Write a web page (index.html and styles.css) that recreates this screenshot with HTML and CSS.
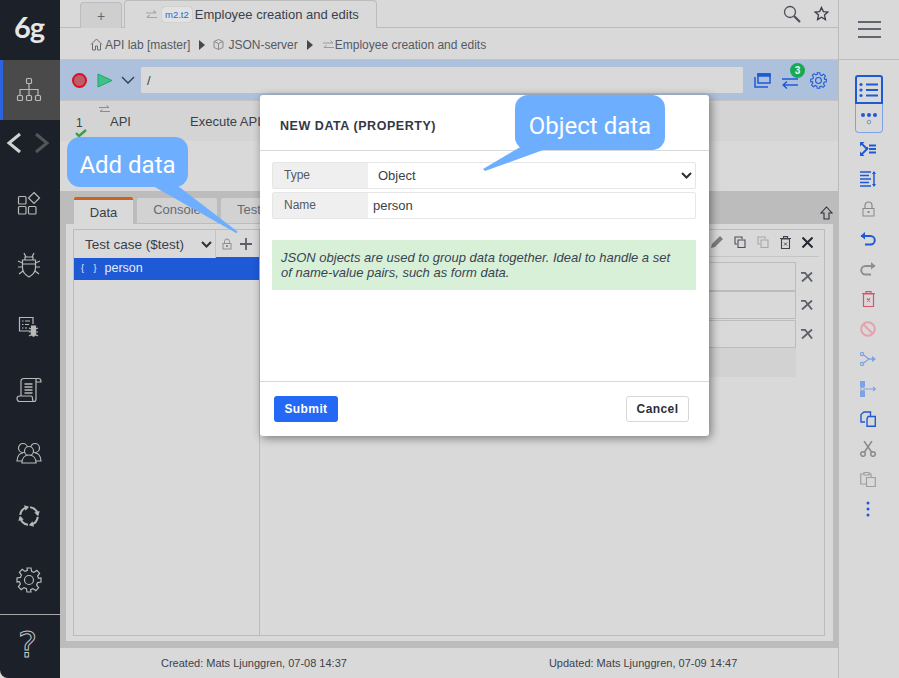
FILE: index.html
```html
<!DOCTYPE html>
<html lang="en">
<head>
    <meta charset="UTF-8">
    <meta name="viewport" content="width=device-width, initial-scale=1.0">
    <title>Employee creation and edits</title>
    <link rel="stylesheet" href="styles.css">
</head>
<body>
<div class="app">
    <nav class="sidebar">
        <div class="logo">6g</div>
        <div class="side-item active">
            <svg width="26" height="26" viewBox="0 0 26 26" fill="none" stroke="#b9b9b9" stroke-width="1.2"><rect x="10.5" y="1.5" width="5" height="5" rx="1"/><rect x="1.5" y="18.5" width="5" height="5" rx="1"/><rect x="10.5" y="18.5" width="5" height="5" rx="1"/><rect x="19.5" y="18.5" width="5" height="5" rx="1"/><path d="M13 6.5v12M4 18.5v-6h18v6"/></svg>
        </div>
        <div class="side-arrows">
            <svg width="48" height="24" viewBox="0 0 48 24" fill="none" stroke-width="3"><path d="M15 3 L4 12 L15 21" stroke="#d2d2d2"/><path d="M31 3 L42 12 L31 21" stroke="#555"/></svg>
        </div>
        <div class="side-item s-62">
            <svg width="24" height="24" viewBox="0 0 24 24" fill="none" stroke="#b9b9b9" stroke-width="1.2"><rect x="1.5" y="5.5" width="7.5" height="7.5" rx="1"/><rect x="1.5" y="15.5" width="7.5" height="7.5" rx="1"/><rect x="11.5" y="15.5" width="7.5" height="7.5" rx="1"/><path d="M17 1.5 L22.5 7 L17 12.5 L11.5 7Z"/></svg>
        </div>
        <div class="side-item s-62">
            <svg width="24" height="26" viewBox="0 0 24 26" fill="none" stroke="#b9b9b9" stroke-width="1.2"><path d="M7 1l2 4M17 1l-2 4M8 5h8v3H8zM5.500 8h13v8c0 4-3 7-6.500 9-3.500-2-6.500-5-6.500-9z"/><path d="M5.500 11L1 9M5.500 15H1M6 19l-4 3M18.500 11L23 9M18.500 15H23M18 19l4 3M5.500 12h13"/></svg>
        </div>
        <div class="side-item s-62">
            <svg width="22" height="22" viewBox="0 0 22 22" fill="none" stroke="#b9b9b9" stroke-width="1.2"><path d="M15 15H1.500V1.500H15V8"/><path d="M4 5h1.500M7 5h5M4 8.500h1.500M7 8.500h4M4 12h1.500M7 12h2"/><path d="M13.500 10h4v9c-1 1.500-3 1.500-4 0z" fill="#b9b9b9"/><path d="M11 12l2.500 1M11 16h2.500M11 20l2.500-1.500M20 12l-2.500 1M20 16h-2.500M20 20l-2.500-1.500"/></svg>
        </div>
        <div class="side-item s-64">
            <svg width="26" height="26" viewBox="0 0 26 26" fill="none" stroke="#b9b9b9" stroke-width="1.200"><path d="M5 19V4c0-1.500 1-2.500 3-2.500h15c1.500 0 2 1.500 2 3.500h-5M20 1.500V22c0 1.500-1 2.500-2 2.500H4c-2 0-3-1-3-3s1-2.500 3-2.500h11c1 0 1.500 1 1.500 2.500s.5 3 1.500 3"/><path d="M8.500 7h8M8.500 10h8M8.500 13h8M8.500 16h8" stroke-width="1.500"/></svg>
        </div>
        <div class="side-item s-62">
            <svg width="26" height="22" viewBox="0 0 26 22" fill="none" stroke="#b9b9b9" stroke-width="1.200"><circle cx="7" cy="6" r="4.500"/><circle cx="19" cy="6" r="4.500"/><path d="M7 11c-3 0-5.500 2-6 8h5M19 11c3 0 5.500 2 6 8h-5"/><circle cx="13" cy="9" r="4.500" fill="#1c2029"/><path d="M6 21c0-5 3-8 7-8s7 3 7 8z" fill="#1c2029"/></svg>
        </div>
        <div class="side-item s-63">
            <svg width="22" height="22" viewBox="0 0 22 22" fill="none"><circle cx="11" cy="11" r="8.800" stroke="#b9b9b9" stroke-width="2" stroke-dasharray="10.800 3" stroke-dashoffset="-1"/><g fill="#b9b9b9"><path id="cycle-head" d="M9 -.6L13.500 2.200 9 5z" transform="rotate(-15 11 11)"/><path d="M9 -.6L13.500 2.200 9 5z" transform="rotate(75 11 11)"/><path d="M9 -.6L13.500 2.200 9 5z" transform="rotate(165 11 11)"/><path d="M9 -.6L13.500 2.200 9 5z" transform="rotate(255 11 11)"/></g></svg>
        </div>
        <div class="side-item s-65">
            <svg width="26" height="26" viewBox="0 0 26 26" fill="none" stroke="#b9b9b9" stroke-width="1.200"><circle cx="13" cy="13" r="4.500"/><path d="M11 1h4l.6 3.400 2.300 1 2.900-2 2.800 2.800-2 2.900 1 2.300L25 11v4l-3.400.6-1 2.300 2 2.900-2.800 2.800-2.900-2-2.300 1L15 25h-4l-.6-3.400-2.300-1-2.900 2-2.800-2.800 2-2.900-1-2.300L1 15v-4l3.400-.6 1-2.300-2-2.900L6.200 2.400l2.900 2 2.300-1z"/></svg>
        </div>
        <div class="side-help">?</div>
    </nav>

    <main class="content">
        <div class="tabbar">
            <div class="tab tab-plus">+</div>
            <div class="tab tab-main">
                <svg class="swap" width="11" height="10" viewBox="0 0 11 10" fill="none" stroke="#a5a5a5" stroke-width="1.200"><path d="M0 3h10M7.500 .5L10 3M11 7.500H1M3.500 5L1 7.500"/></svg>
                <span class="tab-code">m2.t2</span>
                <span>Employee creation and edits</span>
            </div>
            <div class="tab-actions">
                <svg width="18" height="18" viewBox="0 0 18 18" fill="none" stroke="#4b4f58" stroke-width="1.300"><circle cx="7" cy="7" r="5.500"/><path d="M11 11l6 6" stroke-width="2.200"/></svg>
                <svg width="15" height="15" viewBox="0 0 16 16" fill="none" stroke="#3b3f48" stroke-width="1.400"><path d="M8 1.500l2 4.500 4.800.5-3.600 3.200 1 4.800L8 12l-4.200 2.500 1-4.800L1.200 6.500 6 6z"/></svg>
            </div>
        </div>
        <div class="crumbs">
            <svg width="13" height="13" viewBox="0 0 13 13" fill="none" stroke="#6d6d6d"><path d="M1 6.500L6.500 1 12 6.500M2.500 5.500V12h3V8h2v4h3V5.500"/></svg>
            <span class="crumb-first">API lab [master]</span>
            <span class="crumb-sep"></span>
            <svg class="crumb-box" width="11" height="11" viewBox="0 0 11 11" fill="none" stroke="#8a8a8a"><path d="M5.500 .5l4.500 2v6l-4.500 2-4.500-2v-6zM1 2.500l4.500 2 4.500-2M5.500 4.500v6"/></svg>
            <span>JSON-server</span>
            <span class="crumb-sep"></span>
            <svg class="crumb-swap" width="11" height="10" viewBox="0 0 11 10" fill="none" stroke="#9a9a9a"><path d="M0 3h10M7.500 .5L10 3M11 7.500H1M3.500 5L1 7.500"/></svg>
            <span>Employee creation and edits</span>
        </div>
        <div class="toolbar">
            <span class="rec"></span>
            <svg class="play" width="16" height="15" viewBox="0 0 16 15"><path d="M1 1l14 6.500L1 14z" fill="#41c18a" stroke="#17a866"/></svg>
            <svg class="chev" width="14" height="8" viewBox="0 0 14 8" fill="none" stroke="#2f3a52" stroke-width="1.300"><path d="M1 1l6 6 6-6"/></svg>
            <div class="url">/</div>
            <svg class="tool-a" width="17" height="15" viewBox="0 0 17 15" fill="none" stroke="#1f5ad6" stroke-width="1.500"><path d="M4 1h12v9H4zM1 4v10h13" /><path d="M4 1h12v2H4z" fill="#1f5ad6"/></svg>
            <div class="swap-wrap">
                <svg width="17" height="14" viewBox="0 0 17 14" fill="none" stroke="#1f5ad6" stroke-width="1.500"><path d="M0 4h16M16 10H1M5 6.500L1 10l4 3.500"/></svg>
                <span class="badge">3</span>
            </div>
            <svg class="tool-c" width="17" height="17" viewBox="0 0 26 26" fill="none" stroke="#1f5ad6" stroke-width="1.600"><circle cx="13" cy="13" r="4.500"/><path d="M11 1h4l.6 3.400 2.300 1 2.900-2 2.800 2.800-2 2.900 1 2.300L25 11v4l-3.400.6-1 2.300 2 2.900-2.800 2.800-2.900-2-2.300 1L15 25h-4l-.6-3.400-2.300-1-2.900 2-2.800-2.800 2-2.900-1-2.300L1 15v-4l3.400-.6 1-2.300-2-2.900L6.200 2.400l2.900 2 2.300-1z"/></svg>
        </div>
        <div class="step">
            <div class="step-num">1
                <svg class="step-ok" width="12" height="9" viewBox="0 0 12 9" fill="none" stroke="#3f9c46" stroke-width="2.400"><path d="M1 4l3 3 7-6"/></svg>
            </div>
            <div class="step-type">
                <svg width="11" height="9" viewBox="0 0 11 9" fill="none" stroke="#8b8b8b"><path d="M0 2.500h10M7.500 .5L10 2.500M11 6.500H1M3.500 4.500L1 6.500"/></svg>
                <span>API</span>
            </div>
            <div class="step-name">Execute API</div>
        </div>
        <div class="step-gap"></div>

        <section class="panel">
            <div class="panel-tabs">
                <div class="ptab ptab-on">Data</div>
                <div class="ptab">Console</div>
                <div class="ptab ptab-last">Test</div>
                <svg class="panel-up" width="13" height="14" viewBox="0 0 13 14" fill="none" stroke="#2b2f38" stroke-width="1.100"><path d="M6.500 1L12 7H9v6H4V7H1z"/></svg>
            </div>
            <div class="panel-body">
                <div class="data-box">
                    <div class="data-left">
                        <div class="data-head">
                            <div class="case-select">
                                <span>Test case ($test)</span>
                                <svg width="11" height="7" viewBox="0 0 11 7" fill="none" stroke="#2b2f38" stroke-width="2"><path d="M1 1l4.500 4.500L10 1"/></svg>
                            </div>
                            <div class="case-tools">
                                <svg width="10" height="12" viewBox="0 0 10 12" fill="#8f8f8f"><path d="M2.500 5V3.500a2.500 2.500 0 0 1 5 0V5" fill="none" stroke="#8f8f8f"/><path d="M.5 5h9v6.500h-9zM1.500 6v4.500h7V6z" fill-rule="evenodd"/><rect x="4" y="7" width="2" height="2"/></svg>
                                <svg width="12" height="12" viewBox="0 0 12 12" stroke="#5b5f68" stroke-width="1.800"><path d="M6 0v12M0 6h12"/></svg>
                            </div>
                        </div>
                        <div class="data-row">
                            <span class="braces">{ }</span>
                            <span>person</span>
                        </div>
                    </div>
                    <div class="data-right">
                        <div class="data-tools">
                            <svg width="12" height="12" viewBox="0 0 12 12" fill="#7c7c7c"><path d="M9 0l3 3-8 8-4 1 1-4z"/></svg>
                            <svg width="12" height="12" viewBox="0 0 12 12" fill="none" stroke="#4b4f58" stroke-width="1.100"><path d="M8 3V1H1v7h2"/><path d="M4 4h7v7.500H4z"/></svg>
                            <svg width="12" height="12" viewBox="0 0 12 12" fill="none" stroke="#a8a8a8" stroke-width="1.100"><path d="M8 3V1H1v7h2"/><path d="M4 4h7v7.500H4z"/></svg>
                            <svg width="11" height="13" viewBox="0 0 11 13" fill="none" stroke="#3f434c" stroke-width="1.100"><path d="M1.500 3h8v9.500h-8zM0 2.500h11M3.500 2.500V.6h4v1.900"/><path d="M4 6.500l3 3M7 6.500l-3 3" stroke-width=".9"/></svg>
                            <svg width="11" height="11" viewBox="0 0 11 11" stroke="#23262e" stroke-width="2"><path d="M.5 .5l10 10M10.500 .5l-10 10"/></svg>
                        </div>
                        <div class="prop-rows">
                            <div class="prop-row prop-a"><span class="prop-cell"></span><svg width="12" height="10" viewBox="0 0 12 10" fill="none" stroke="#5b5f68" stroke-width="1.800"><path d="M0 .8h4l7 8.700M11 .5L1 9.500"/></svg></div>
                            <div class="prop-row prop-b"><span class="prop-cell"></span><svg width="12" height="10" viewBox="0 0 12 10" fill="none" stroke="#5b5f68" stroke-width="1.800"><path d="M0 .8h4l7 8.700M11 .5L1 9.500"/></svg></div>
                            <div class="prop-row prop-c"><span class="prop-cell"></span><svg width="12" height="10" viewBox="0 0 12 10" fill="none" stroke="#5b5f68" stroke-width="1.800"><path d="M0 .8h4l7 8.700M11 .5L1 9.500"/></svg></div>
                            <div class="prop-row prop-a"><span class="prop-cell prop-shade"></span></div>
                        </div>
                    </div>
                </div>
            </div>
        </section>

        <footer class="status">
            <span class="status-a">Created: Mats Ljunggren, 07-08 14:37</span>
            <span class="status-b">Updated: Mats Ljunggren, 07-09 14:47</span>
        </footer>
    </main>

    <aside class="rightbar">
        <div class="menu-area"><span class="burger"></span></div>
        <div class="right-tools">
            <div class="view-box view-on">
                <svg width="20" height="16" viewBox="0 0 20 16" fill="#1f5ad6"><circle cx="2" cy="2.500" r="1.600"/><circle cx="2" cy="8" r="1.600"/><circle cx="2" cy="13.500" r="1.600"/><path d="M7 1.500h12v2H7zM7 7h12v2H7zM7 12.500h12v2H7z"/></svg>
            </div>
            <div class="view-box view-off">
                <svg width="18" height="13" viewBox="0 0 18 13" fill="#1f5ad6"><circle cx="3" cy="3" r="2"/><circle cx="9" cy="3" r="2"/><circle cx="15" cy="3" r="2"/><circle cx="9" cy="10" r="1.800" fill="none" stroke="#6f93d8"/></svg>
            </div>
            <div class="rt rt-first">
                <svg width="16" height="14" viewBox="0 0 16 14" fill="none" stroke="#1f5ad6" stroke-width="1.800"><path d="M1 1l5 5h2M1 13l5-5 2-2M9 3.500h7M9 7h7M9 10.500h7"/><path d="M0 0h4.500L0 4.500zM0 14h4.500L0 9.500z" fill="#1f5ad6" stroke="none"/></svg>
            </div>
            <div class="rt">
                <svg width="16" height="16" viewBox="0 0 16 16" fill="none" stroke="#1f5ad6" stroke-width="1.500"><path d="M0 1h11M0 4.500h9M0 8h11M0 11.500h9M0 15h11M14 1v14"/><path d="M12 3l2-3 2 3zM12 13l2 3 2-3z" fill="#1f5ad6" stroke="none"/></svg>
            </div>
            <div class="rt">
                <svg width="13" height="16" viewBox="0 0 13 16" fill="#8a8a8a"><path d="M3 7V4.500a3.500 3.500 0 0 1 7 0V7" fill="none" stroke="#8a8a8a" stroke-width="1.200"/><path d="M.5 7h12v8.500H.5zM1.500 8v6.500h10V8z" fill-rule="evenodd"/><rect x="5.500" y="10" width="2" height="2"/></svg>
            </div>
            <div class="rt">
                <svg width="16" height="14" viewBox="0 0 16 14" fill="none" stroke="#1f5ad6" stroke-width="2"><path d="M1 4h9.500a4 4 0 0 1 0 8.500H5"/><path d="M5 0L.5 4 5 7.500z" fill="#1f5ad6" stroke="none"/></svg>
            </div>
            <div class="rt">
                <svg width="16" height="14" viewBox="0 0 16 14" fill="none" stroke="#8f8f8f" stroke-width="2"><path d="M15 4H5.500a4 4 0 0 0 0 8.500H11"/><path d="M11 0l4.500 4L11 7.500z" fill="#8f8f8f" stroke="none"/></svg>
            </div>
            <div class="rt">
                <svg width="13" height="16" viewBox="0 0 13 16" fill="none" stroke="#d9536b" stroke-width="1.200"><path d="M1.500 3h10v12.500h-10zM0 2.500h13M4 2.500V.6h5v1.900"/><path d="M5 7.500l3 3M8 7.500l-3 3"/></svg>
            </div>
            <div class="rt">
                <svg width="16" height="16" viewBox="0 0 16 16" fill="none" stroke="#e3a3ae" stroke-width="2"><circle cx="8" cy="8" r="6.800"/><path d="M3.200 3.200l9.600 9.600"/></svg>
            </div>
            <div class="rt">
                <svg width="16" height="14" viewBox="0 0 16 14" fill="none" stroke="#7ea3e4" stroke-width="1.300"><circle cx="2" cy="2" r="1.600"/><circle cx="2" cy="12" r="1.600"/><path d="M3.500 3L9 7H13M3.500 11L9 7"/><path d="M12 4l4 3-4 3z" fill="#7ea3e4" stroke="none"/></svg>
            </div>
            <div class="rt">
                <svg width="16" height="16" viewBox="0 0 16 16" fill="none" stroke="#7ea3e4" stroke-width="1.100"><path d="M0 0h5v6H0zM0 10h5v6H0z" fill="#7ea3e4" stroke="none"/><circle cx="2.500" cy="8" r="1.800" fill="#d9d9d9"/><path d="M5 8h10M13 6l2.500 2L13 10"/></svg>
            </div>
            <div class="rt">
                <svg width="16" height="16" viewBox="0 0 16 16" fill="none" stroke="#1f5ad6" stroke-width="1.400"><path d="M7 1H4L1 3.500V11h4"/><path d="M8 5.500h7.300V15.300H7V8z" /><path d="M7 1h3.500v4"/></svg>
            </div>
            <div class="rt">
                <svg width="16" height="16" viewBox="0 0 16 16" fill="none" stroke="#8a8a8a" stroke-width="1.500"><circle cx="3" cy="13" r="2.300"/><circle cx="13" cy="13" r="2.300"/><path d="M4.500 11L12 0M11.500 11L4 0"/></svg>
            </div>
            <div class="rt">
                <svg width="16" height="16" viewBox="0 0 16 16" fill="none" stroke="#9f9f9f" stroke-width="1.200"><path d="M4 3H.7v10H6M4 1.500h5V4H4zM9 3h2v3"/><path d="M6.500 6.500h8.800v9H6.500z"/></svg>
            </div>
            <div class="rt">
                <svg width="4" height="16" viewBox="0 0 4 16" fill="#1f5ad6"><circle cx="2" cy="2" r="1.500"/><circle cx="2" cy="8" r="1.500"/><circle cx="2" cy="14" r="1.500"/></svg>
            </div>
        </div>
    </aside>

    <div class="modal">
        <div class="modal-head">NEW DATA (PROPERTY)</div>
        <div class="modal-body">
            <div class="field">
                <div class="field-label">Type</div>
                <div class="field-value field-select">
                    <span>Object</span>
                    <svg width="11" height="7" viewBox="0 0 11 7" fill="none" stroke="#2b2f38" stroke-width="2"><path d="M1 1l4.500 4.500L10 1"/></svg>
                </div>
            </div>
            <div class="field">
                <div class="field-label">Name</div>
                <div class="field-value">person</div>
            </div>
            <div class="hint">JSON objects are used to group data together. Ideal to handle a set of name-value pairs, such as form data.</div>
        </div>
        <div class="modal-foot">
            <button class="btn btn-submit">Submit</button>
            <button class="btn btn-cancel">Cancel</button>
        </div>
    </div>

    <div class="callout callout-add">Add data</div>
    <div class="callout callout-object">Object data</div>
    <svg class="tails" width="899" height="678" viewBox="0 0 899 678" fill="#6eaeff">
        <path d="M153 186 L178 186 L238 232 L236 233Z"/>
        <path d="M522 146 L546 149 L485 171 L483 169Z"/>
    </svg>
</div>
</body>
</html>
```

FILE: styles.css
```css
* {
    box-sizing: border-box;
}
body {
    margin: 0;
    font-family: "Liberation Sans", Arial, sans-serif;
    font-size: 12px;
    color: #3a3f4a;
    background: #d9d9d9;
}
svg {
    display: block;
    flex: none;
}
.app {
    position: relative;
    display: flex;
    width: 899px;
    height: 678px;
    overflow: hidden;
}

/* left nav */
.sidebar {
    width: 60px;
    flex: none;
    display: flex;
    flex-direction: column;
    background: #1c2029;
    border-bottom-left-radius: 8px;
}
.logo {
    height: 60px;
    padding: 9px 2px 0 0;
    text-align: center;
    font-family: Lato, sans-serif;
    font-weight: 700;
    font-size: 29px;
    color: #e6e6e6;
    letter-spacing: -1px;
}
.side-item {
    display: flex;
    align-items: center;
    justify-content: center;
    padding-right: 3px;
}
.side-item.active {
    height: 60px;
    background: #4a4a4a;
    border-left: 3px solid #2b63e0;
    padding-right: 5px;
}
.side-arrows {
    height: 46px;
    margin-bottom: 6px;
    display: flex;
    align-items: center;
    justify-content: center;
    padding: 0 2px 1px 0;
}
.s-62 { height: 62px; }
.s-63 { height: 63px; }
.s-64 { height: 64px; }
.s-65 { height: 65px; }
.side-help {
    margin-top: 2px;
    flex: 1;
    padding-right: 5px;
    border-top: 1px solid #a8a8a8;
    text-align: center;
    font-family: "DejaVu Sans", sans-serif;
    font-size: 36px;
    line-height: 60px;
    color: #1c2029;
    -webkit-text-stroke: 1px #c4c4c4;
}

/* centre */
.content {
    width: 778px;
    flex: none;
    display: flex;
    flex-direction: column;
}
.tabbar {
    height: 28px;
    display: flex;
    align-items: flex-end;
    padding-left: 20px;
    border-bottom: 1px solid #bcbcbc;
}
.tab {
    height: 27px;
    display: flex;
    align-items: center;
    margin-bottom: -1px;
    border: 1px solid #bcbcbc;
    border-bottom: 0;
    border-radius: 4px 4px 0 0;
}
.tab-plus {
    width: 42px;
    justify-content: center;
    background: #cfcfcf;
    color: #666;
    font-size: 14px;
    height: 26px;
}
.tab-main {
    width: 253px;
    margin-left: 2px;
    padding-left: 21px;
    font-size: 13px;
    background: #d9d9d9;
    height: 28px;
}
.tab-code {
    margin: 0 3px 0 5px;
    padding: 2px 3px;
    font-size: 9.500px;
    color: #2566d8;
    background: #e2e2e2;
    border-radius: 3px;
    box-shadow: 0 0 1px #999;
}
.tab-actions {
    margin-left: auto;
    display: flex;
    align-items: center;
    gap: 13px;
    height: 27px;
    padding-right: 9px;
}
.crumbs {
    height: 32px;
    display: flex;
    align-items: center;
    padding: 2px 0 0 30px;
    border-bottom: 1px solid #c4c4c4;
    color: #555a64;
    font-size: 12px;
}
.crumb-first {
    margin-left: 2px;
}
.crumb-sep {
    width: 0;
    height: 0;
    margin: 0 9px;
    border-left: 6px solid #45484f;
    border-top: 5.500px solid transparent;
    border-bottom: 5.500px solid transparent;
}
.crumb-box {
    margin: 0 4px 0 -1px;
}
.crumb-swap {
    margin: 0 1px 0 1px;
}
.toolbar {
    height: 41px;
    display: flex;
    align-items: center;
    padding-left: 12px;
    background: #aec1dc;
    border-bottom: 1px solid #c4c4c4;
}
.rec {
    width: 15px;
    height: 15px;
    border-radius: 50%;
    background: #c25a6a;
    border: 2px solid #d7111f;
}
.play {
    margin-left: 10px;
}
.chev {
    margin-left: 8px;
}
.url {
    width: 602px;
    height: 26px;
    margin-left: 6px;
    padding: 6px 6px;
    font-size: 13px;
    background: #d9d9d9;
    border-radius: 1px;
}
.tool-a {
    margin-left: 11px;
}
.swap-wrap {
    position: relative;
    margin-left: 11px;
    padding-top: 3px;
}
.badge {
    position: absolute;
    left: 8px;
    top: -9px;
    width: 15px;
    height: 15px;
    border-radius: 50%;
    background: #18a957;
    color: #e8f5ec;
    font-size: 10px;
    font-weight: 700;
    line-height: 15px;
    text-align: center;
}
.tool-c {
    margin-left: 11px;
}
.step {
    height: 40px;
    display: flex;
    background: #d4d4d4;
    font-size: 13px;
}
.step-num {
    position: relative;
    width: 44px;
    padding: 15px 0 0 16px;
    font-size: 12px;
}
.step-ok {
    position: absolute;
    left: 15px;
    top: 28px;
}
.step-type {
    width: 86px;
    padding-top: 4px;
}
.step-type svg {
    margin-left: -5px;
}
.step-type span {
    display: block;
    margin: 0 0 0 6px;
}
.step-name {
    padding-top: 13px;
}
.step-gap {
    height: 50px;
}

/* data panel */
.panel {
    height: 457px;
    padding: 0 5px 7px 6px;
    background: #bcbcbc;
    display: flex;
    flex-direction: column;
}
.panel-tabs {
    position: relative;
    height: 33px;
    display: flex;
    align-items: flex-end;
    padding-left: 8px;
    gap: 4px;
    font-size: 13px;
}
.ptab {
    width: 80px;
    height: 25px;
    margin-bottom: 1px;
    padding-top: 4px;
    text-align: center;
    background: #d2d2d2;
    color: #666a72;
    border-radius: 2px 2px 0 0;
}
.ptab-on {
    width: 59px;
    height: 27px;
    margin-bottom: 0;
    padding-top: 5px;
    background: #d9d9d9;
    border-top: 3px solid #c8641f;
    color: #3a3f4a;
}
.ptab-last {
    width: 56px;
}
.panel-up {
    position: absolute;
    right: 0;
    top: 15px;
}
.panel-body {
    flex: 1;
    padding: 5px 8px 5px 7px;
    background: #d9d9d9;
    display: flex;
    min-height: 0;
}
.data-box {
    flex: 1;
    display: flex;
    border: 1px solid #bcbcbc;
}
.data-left {
    width: 186px;
    flex: none;
    border-right: 1px solid #bcbcbc;
}
.data-head {
    height: 28px;
    display: flex;
}
.case-select {
    width: 142px;
    display: flex;
    align-items: center;
    justify-content: space-between;
    padding: 0 3px 0 11px;
    font-size: 13.500px;
    background: #d9d9d9;
    border-right: 1px solid #c4c4c4;
}
.case-tools {
    flex: 1;
    display: flex;
    align-items: center;
    gap: 8px;
    padding-left: 6px;
    border-bottom: 1px solid #1f5ad6;
}
.data-row {
    height: 22px;
    display: flex;
    align-items: center;
    gap: 8px;
    padding: 0 0 2px 7px;
    background: #1f5ad6;
    color: #e6ecf8;
    font-size: 12.500px;
}
.braces {
    font-size: 9px;
    word-spacing: 7px;
}
.data-right {
    flex: 1;
    padding-right: 5px;
}
.data-tools {
    height: 27px;
    display: flex;
    align-items: center;
    justify-content: flex-end;
    gap: 11px;
    padding: 0 6px 2px 0;
    border-bottom: 1px solid #c4c4c4;
}
.prop-rows {
    padding-top: 5px;
}
.prop-row {
    display: flex;
    align-items: center;
    gap: 5px;
    padding-right: 6px;
}
.prop-a { height: 29px; }
.prop-b { height: 28px; }
.prop-c { height: 28px; margin-top: 1px; }
.prop-cell {
    flex: 1;
    height: 100%;
    border: 1px solid #bcbcbc;
    border-left: 0;
}
.prop-shade {
    margin-right: 17px;
    border: 0;
    background: #d2d2d2;
}
.status {
    flex: 1;
    display: flex;
    align-items: center;
    font-size: 11px;
    color: #3d424c;
}
.status-a {
    margin-left: 101px;
}
.status-b {
    margin-left: 202px;
}

/* right bar */
.rightbar {
    flex: 1;
    border-left: 1px solid #bcbcbc;
}
.menu-area {
    height: 60px;
    display: flex;
    align-items: center;
    justify-content: center;
    border-bottom: 1px solid #bcbcbc;
}
.burger {
    width: 23px;
    height: 17px;
    border-top: 2.500px solid #63666e;
    border-bottom: 2.500px solid #63666e;
    position: relative;
}
.burger::after {
    content: "";
    position: absolute;
    left: 0;
    right: 0;
    top: 4.500px;
    height: 2.500px;
    background: #63666e;
}
.right-tools {
    display: flex;
    flex-direction: column;
    align-items: center;
    padding-top: 15px;
}
.view-box {
    width: 28px;
    height: 29px;
    display: flex;
    align-items: center;
    justify-content: center;
}
.view-on {
    border: 2px solid #1f5ad6;
    border-radius: 3px 3px 0 0;
}
.view-off {
    border: 1px solid #7ea3e4;
    border-top: 0;
    border-radius: 0 0 4px 4px;
}
.rt {
    width: 28px;
    height: 30px;
    display: flex;
    align-items: center;
    justify-content: center;
    padding-right: 2px;
}
.rt-first {
    margin-top: 1px;
}

/* dialog */
.modal {
    position: absolute;
    left: 260px;
    top: 95px;
    width: 449px;
    height: 341px;
    display: flex;
    flex-direction: column;
    background: #fff;
    border-radius: 3px;
    box-shadow: 2px 2px 10px rgba(0, 0, 0, .45);
}
.modal-head {
    height: 56px;
    padding: 24px 0 0 20px;
    font-size: 12.500px;
    font-weight: 700;
    letter-spacing: .55px;
    color: #333844;
    border-bottom: 1px solid #d5d9dc;
}
.modal-body {
    flex: 1;
    padding: 11px 13px 0 12px;
}
.field {
    display: flex;
    height: 27px;
    margin-bottom: 3px;
    border: 1px solid #e6e6e6;
    border-radius: 2px;
}
.field-label {
    width: 95px;
    padding: 5px 0 0 11px;
    background: #efefef;
    color: #555a64;
}
.field-value {
    flex: 1;
    display: flex;
    align-items: center;
    padding-left: 5px;
    font-size: 13px;
}
.field-select {
    justify-content: space-between;
    padding: 0 3px 0 10px;
}
.hint {
    margin-top: 21px;
    height: 50px;
    padding: 10px 16px 10px 9px;
    line-height: 15px;
    font-style: italic;
    font-size: 13px;
    background: #d8f0d8;
    color: #3a4450;
}
.modal-foot {
    height: 55px;
    display: flex;
    align-items: center;
    justify-content: space-between;
    padding: 0 20px 0 14px;
    border-top: 1px solid #d5d9dc;
}
.btn {
    height: 26px;
    font-family: "Liberation Sans", Arial, sans-serif;
    font-size: 12px;
    font-weight: 700;
    letter-spacing: .4px;
    border-radius: 3px;
}
.btn-submit {
    width: 64px;
    border: 0;
    background: #2468f6;
    color: #fff;
}
.btn-cancel {
    width: 63px;
    background: #fff;
    border: 1px solid #d8d8d8;
    color: #2b2f38;
}

/* tutorial bubbles */
.callout {
    position: absolute;
    display: flex;
    align-items: center;
    justify-content: center;
    padding-top: 6px;
    background: #6eaeff;
    color: #fff;
    font-family: Roboto, sans-serif;
    font-size: 24px;
    border-radius: 13px;
}
.callout-add {
    left: 67px;
    top: 137px;
    width: 121px;
    height: 50px;
}
.callout-object {
    left: 515px;
    top: 95px;
    width: 150px;
    height: 55px;
}
.tails {
    position: absolute;
    left: 0;
    top: 0;
    pointer-events: none;
}
```
